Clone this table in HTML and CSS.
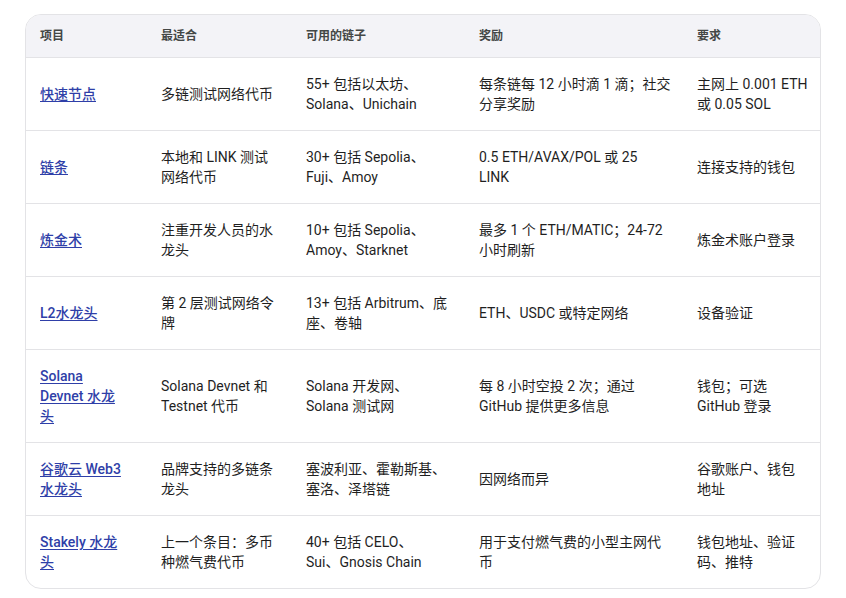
FILE: index.html
```html
<!DOCTYPE html>
<html lang="zh-CN">
<head>
<meta charset="utf-8">
<title>水龙头对比</title>
<link rel="stylesheet" href="styles.css">
</head>
<body>
<div class="table-wrap">
<table class="faucets">
<colgroup>
<col class="c1"><col class="c2"><col class="c3"><col class="c4"><col class="c5">
</colgroup>
<thead>
<tr><th>项目</th><th>最适合</th><th>可用的链子</th><th>奖励</th><th>要求</th></tr>
</thead>
<tbody>
<tr>
<td><a href="#">快速节点</a></td>
<td>多链测试网络代币</td>
<td>55+ 包括以太坊、<br>Solana、Unichain</td>
<td>每条链每 12 小时滴 1 滴；社交<br>分享奖励</td>
<td>主网上 0.001 ETH<br>或 0.05 SOL</td>
</tr>
<tr>
<td><a href="#">链条</a></td>
<td>本地和 LINK 测试<br>网络代币</td>
<td>30+ 包括 Sepolia、<br>Fuji、Amoy</td>
<td>0.5 ETH/AVAX/POL 或 25<br>LINK</td>
<td>连接支持的钱包</td>
</tr>
<tr>
<td><a href="#">炼金术</a></td>
<td>注重开发人员的水<br>龙头</td>
<td>10+ 包括 Sepolia、<br>Amoy、Starknet</td>
<td>最多 1 个 ETH/MATIC；24-72<br>小时刷新</td>
<td>炼金术账户登录</td>
</tr>
<tr>
<td><a href="#">L2水龙头</a></td>
<td>第 2 层测试网络令<br>牌</td>
<td>13+ 包括 Arbitrum、底<br>座、卷轴</td>
<td>ETH、USDC 或特定网络</td>
<td>设备验证</td>
</tr>
<tr>
<td><a href="#">Solana<br>Devnet 水龙<br>头</a></td>
<td>Solana Devnet 和<br>Testnet 代币</td>
<td>Solana 开发网、<br>Solana 测试网</td>
<td>每 8 小时空投 2 次；通过<br>GitHub 提供更多信息</td>
<td>钱包；可选<br>GitHub 登录</td>
</tr>
<tr>
<td><a href="#">谷歌云 Web3<br>水龙头</a></td>
<td>品牌支持的多链条<br>龙头</td>
<td>塞波利亚、霍勒斯基、<br>塞洛、泽塔链</td>
<td>因网络而异</td>
<td>谷歌账户、钱包<br>地址</td>
</tr>
<tr>
<td><a href="#">Stakely 水龙<br>头</a></td>
<td>上一个条目：多币<br>种燃气费代币</td>
<td>40+ 包括 CELO、<br>Sui、Gnosis Chain</td>
<td>用于支付燃气费的小型主网代<br>币</td>
<td>钱包地址、验证<br>码、推特</td>
</tr>
</tbody>
</table>
</div>
</body>
</html>
```
FILE: styles.css
```css
html, body {
  margin: 0;
  padding: 0;
  background: #ffffff;
}
body {
  padding: 14px 25px 0 25px;
  font-family: Roboto, "Noto Sans CJK SC", sans-serif;
  color: #1f1f1f;
}
.table-wrap {
  width: 796px;
  box-sizing: border-box;
  border: 1px solid #e3e3e6;
  border-radius: 16px;
  overflow: hidden;
}
.faucets {
  width: 794px;
  border-collapse: collapse;
  table-layout: fixed;
}
.c1 { width: 121px; }
.c2 { width: 145px; }
.c3 { width: 173px; }
.c4 { width: 218px; }
.c5 { width: 137px; }
.faucets th {
  background: #f3f3f7;
  text-align: left;
  font-size: 12px;
  font-weight: 700;
  color: #444746;
  line-height: 20px;
  padding: 11px 14px;
  border-bottom: 1px solid #e3e3e6;
}
.faucets td {
  font-size: 14px;
  line-height: 20px;
  padding: 16px 14px;
  vertical-align: middle;
  white-space: nowrap;
  border-bottom: 1px solid #e3e3e6;
}
.faucets tbody tr:last-child td {
  border-bottom: none;
}
.faucets a {
  color: #2f3fa8;
  font-weight: 500;
  text-decoration: underline;
  text-underline-offset: 2px;
}
```
